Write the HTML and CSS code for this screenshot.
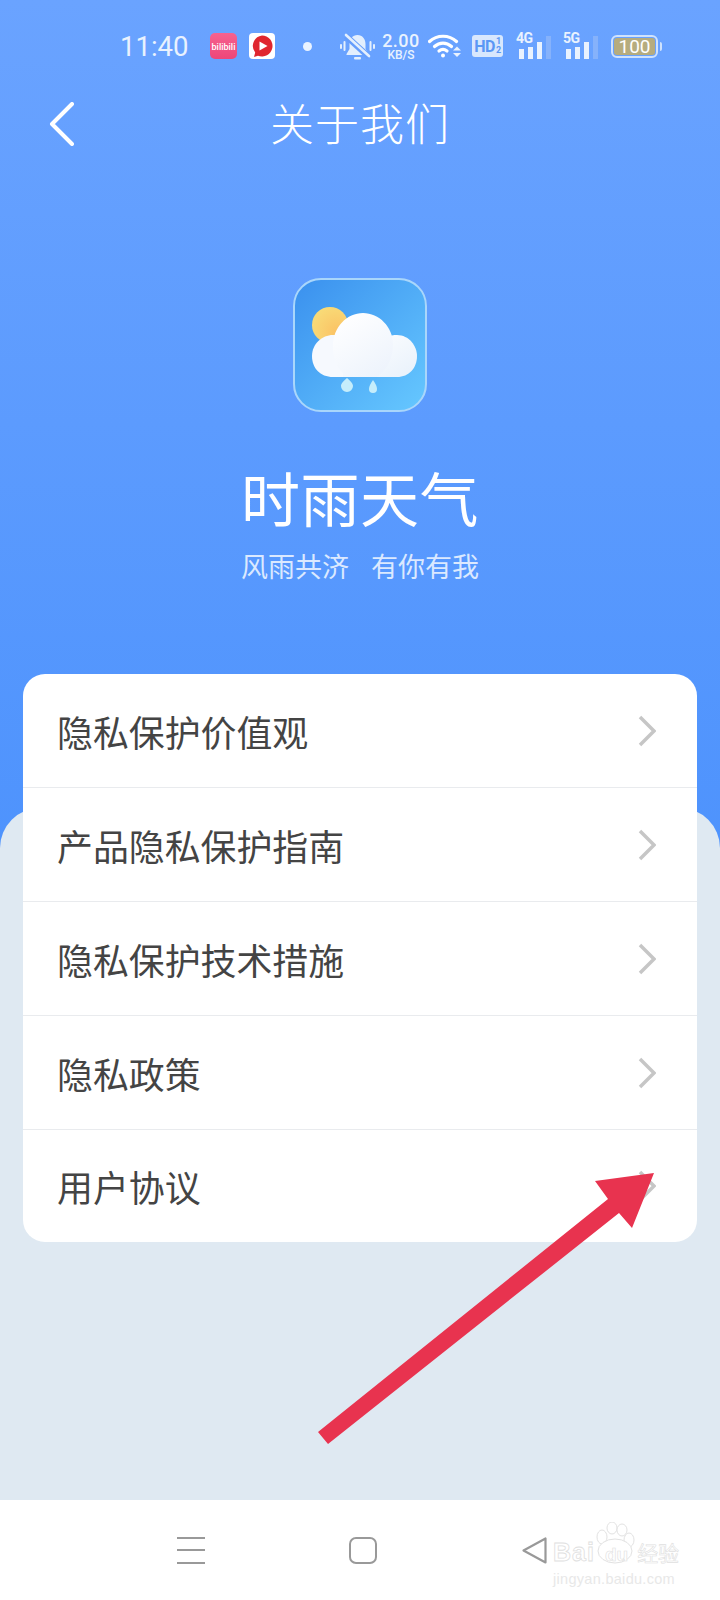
FILE: index.html
```html
<!DOCTYPE html>
<html lang="zh-CN">
    <head>
        <meta charset="UTF-8">
        <title>关于我们</title>
        <link rel="stylesheet" href="styles.css">
    </head>
    <body>
        <div class="screen">
            <div class="top_panel">
                <div class="status_bar">
                    <span class="clock">11:40</span>
                    <span class="app_bili">bilibili</span>
                    <svg class="app_video" viewBox="0 0 26 26">
                        <rect width="26" height="26" rx="4" fill="#ffffff"/>
                        <path d="M13 2.500a10.500 10.500 0 1 1-4 20.200l-4 1.300 1.200-4.500A10.500 10.500 0 0 1 13 2.500z" fill="#e0262f"/>
                        <path d="M10.500 8.500l8 4.500-8 4.500z" fill="#ffffff"/>
                    </svg>
                    <span class="dot"></span>
                    <svg class="bell" viewBox="0 0 35 27">
                        <path d="M17.500 2c-5 0-8 4-8 9v5l-3 5v1h22v-1l-3-5v-5c0-5-3-9-8-9z" fill="#e3effd"/>
                        <rect x="14" y="24" width="7" height="2.500" rx="1" fill="#e3effd"/>
                        <path d="M6 3l23 21" stroke="#649dfc" stroke-width="6"/>
                        <path d="M6 2l23 21" stroke="#e3effd" stroke-width="2.600" stroke-linecap="round"/>
                        <path d="M1 12v3M4.500 9v8M30.500 9v8M34 12v3" stroke="#e3effd" stroke-width="2" stroke-linecap="round"/>
                    </svg>
                    <div class="speed">
                        <span class="speed_num">2.00</span>
                        <span class="speed_unit">KB/S</span>
                    </div>
                    <svg class="wifi" viewBox="0 0 33 24" fill="none" stroke="#ffffff" stroke-width="3.200" stroke-linecap="round">
                        <path d="M1.500 7.500C9 .5 21 .5 28.500 7.500"/>
                        <path d="M6.500 12.500c5-4.500 12-4.500 17 0"/>
                        <path d="M11 17c2.500-2 5.500-2 8 0"/>
                        <circle cx="15" cy="21.500" r="2" fill="#ffffff" stroke="none"/>
                        <path d="M25 16.500l4-4 4 4zM25 19l4 4 4-4z" fill="#e9f2fe" stroke="none"/>
                    </svg>
                    <div class="hd_badge">HD<span class="hd_frac">1<br>2</span></div>
                    <div class="signal">
                        <span class="signal_label">4G</span>
                        <span class="bar bar_1"></span>
                        <span class="bar bar_2"></span>
                        <span class="bar bar_3"></span>
                        <span class="bar bar_4"></span>
                    </div>
                    <div class="signal">
                        <span class="signal_label">5G</span>
                        <span class="bar bar_1"></span>
                        <span class="bar bar_2"></span>
                        <span class="bar bar_3"></span>
                        <span class="bar bar_4"></span>
                    </div>
                    <div class="battery"><span class="battery_fill">100</span></div>
                    <span class="battery_nib"></span>
                </div>

                <div class="nav_bar">
                    <svg class="back" viewBox="0 0 26 44" fill="none" stroke="#ffffff" stroke-width="4" stroke-linecap="round" stroke-linejoin="round">
                        <path d="M23 2L3 22l20 20"/>
                    </svg>
                    <span class="nav_title">关于我们</span>
                </div>

                <div class="hero">
                    <svg class="logo" viewBox="0 0 134 134">
                        <defs>
                            <linearGradient id="logo_bg" x1="0" y1="0" x2="1" y2="1">
                                <stop offset="0" stop-color="#3a90ee"/>
                                <stop offset="1" stop-color="#66c8ff"/>
                            </linearGradient>
                            <linearGradient id="cloud_bg" x1="0" y1="0" x2="1" y2="1">
                                <stop offset="0" stop-color="#ffffff"/>
                                <stop offset="1" stop-color="#e8f1fb"/>
                            </linearGradient>
                            <linearGradient id="cloud_top" x1="0.2" y1="0" x2="0.8" y2="1">
                                <stop offset="0" stop-color="#ffffff"/>
                                <stop offset="1" stop-color="#edf3fc"/>
                            </linearGradient>
                            <radialGradient id="sun_bg" cx="0.7" cy="0.7" r="0.8">
                                <stop offset="0" stop-color="#fbc264"/>
                                <stop offset="1" stop-color="#f8dc78"/>
                            </radialGradient>
                        </defs>
                        <rect x="1" y="1" width="132" height="132" rx="27" fill="url(#logo_bg)" stroke="#a9d6fb" stroke-width="2"/>
                        <circle cx="37" cy="47" r="18" fill="url(#sun_bg)"/>
                        <path d="M40 99C27 99 19 90 19 78C19 66 29 57 40 57C52 57 60 66 60 78V99z" fill="#f6f9fe"/>
                        <path d="M60 99V78C62 66 92 57 104 57C116 57 124 68 124 78C124 90 116 99 104 99z" fill="url(#cloud_bg)"/>
                        <path d="M50 95C42 88 40 78 40 68C40 49 54 35 70 35C86 35 100 49 100 66C100 84 92 92 84 99H50z" fill="url(#cloud_top)"/>
                        <path d="M54 100c3 3 6 5 6 8a6 6 0 0 1-12 0c0-3 3-5 6-8z" fill="#c5edfb"/>
                        <path d="M80 102c2 3 4 6 4 9a4 4 0 0 1-8 0c0-3 2-6 4-9z" fill="#c5edfb"/>
                    </svg>
                    <h1 class="app_name">时雨天气</h1>
                    <p class="slogan"><span>风雨共济</span><span>有你有我</span></p>
                </div>
            </div>

            <div class="sheet">
                <ul class="card">
                    <li class="row"><span>隐私保护价值观</span><svg class="chevron" viewBox="0 0 18 32"><path d="M2 2l14 14L2 30"/></svg></li>
                    <li class="row"><span>产品隐私保护指南</span><svg class="chevron" viewBox="0 0 18 32"><path d="M2 2l14 14L2 30"/></svg></li>
                    <li class="row"><span>隐私保护技术措施</span><svg class="chevron" viewBox="0 0 18 32"><path d="M2 2l14 14L2 30"/></svg></li>
                    <li class="row"><span>隐私政策</span><svg class="chevron" viewBox="0 0 18 32"><path d="M2 2l14 14L2 30"/></svg></li>
                    <li class="row"><span>用户协议</span><svg class="chevron" viewBox="0 0 18 32"><path d="M2 2l14 14L2 30"/></svg></li>
                </ul>
            </div>

            <div class="bottom_nav">
                <div class="menu_icon"><span></span><span></span><span></span></div>
                <div class="home_icon"></div>
                <svg class="back_icon" viewBox="0 0 25 27" fill="none" stroke="#999999" stroke-width="2.200" stroke-linejoin="round">
                    <path d="M23.500 1.500v24L1.500 13.500z"/>
                </svg>
            </div>

            <svg class="arrow" viewBox="0 0 720 1600">
                <polygon points="318,1432 328,1444 619,1213 632,1228 654,1173 595,1181 608,1199" fill="#e8334f"/>
            </svg>

            <div class="watermark">
                <svg class="paw" viewBox="0 0 40 42" fill="#ffffff" stroke="#e2e2e2" stroke-width="1">
                    <ellipse cx="7" cy="15" rx="5" ry="7"/>
                    <ellipse cx="17" cy="6" rx="5" ry="6"/>
                    <ellipse cx="27" cy="8" rx="5" ry="6"/>
                    <ellipse cx="34" cy="18" rx="5" ry="7"/>
                    <ellipse cx="20" cy="29" rx="17" ry="12"/>
                </svg>
                <div class="wm_brand"><span class="wm_bai">Bai</span><span class="wm_du">du</span><span class="wm_cn">经验</span></div>
                <div class="wm_url">jingyan.baidu.com</div>
            </div>
        </div>
    </body>
</html>
```

FILE: styles.css
```css
body {
    margin: 0px;
    padding: 0px;
    background: #ffffff;
    font-family: "Noto Sans CJK SC", "Noto Sans", sans-serif;
}

.screen {
    position: relative;
    width: 720px;   height: 1600px;
    display: flex;
    flex-direction: column;
    overflow: hidden;
    background: #dfe9f2;
}

.top_panel {
    height: 848px;
    flex: none;
    background: linear-gradient(180deg, #6aa3ff 0%, #4e93fd 100%);
    color: #ffffff;
}

/* status bar */
.status_bar {
    height: 90px;
    box-sizing: border-box;
    padding: 2px 0px 0px 120px;
    display: flex;
    align-items: center;
    font-family: "Roboto", sans-serif;
    color: #e9f2fe;
}

.clock { width: 68px; font-size: 27.500px; }

.app_bili {
    width: 27px;    height: 26px;
    margin-left: 22px;
    border-radius: 5px;
    background: linear-gradient(180deg, #f6628f 0%, #ee4679 100%);
    color: #ffffff;
    font-size: 9px;
    font-weight: 500;
    line-height: 28px;
    text-align: center;
    overflow: hidden;
}

.app_video { width: 26px; height: 26px; margin-left: 12px; }

.dot {
    width: 9px;     height: 9px;
    margin-left: 28px;
    border-radius: 50%;
    background: #eaf3ff;
}

.bell { width: 35px; height: 27px; margin-left: 28px; }

.speed {
    width: 40px;
    margin-left: 6px;
    display: flex;
    flex-direction: column;
    align-items: center;
    font-weight: 500;
}
.speed_num { font-size: 18px; line-height: 17px; letter-spacing: 0.5px; }
.speed_unit { font-size: 12px; line-height: 12px; }

.wifi { width: 33px; height: 24px; margin-left: 7px; }

.hd_badge {
    width: 31px;    height: 22px;
    margin-left: 11px;
    display: flex;
    align-items: center;
    justify-content: center;
    border-radius: 3px;
    background: #d8e7fd;
    color: #5b97f5;
    font-size: 16px;
    font-weight: 700;
    letter-spacing: -0.5px;
}
.hd_frac { font-size: 9px; line-height: 9px; margin-left: 1px; text-align: center; }

.signal {
    position: relative;
    width: 35px;    height: 26px;
    box-sizing: border-box;
    margin-left: 13px;
    padding-left: 3px;
    display: flex;
    align-items: flex-end;
    gap: 4px;
}
.signal + .signal { margin-left: 12px; }
.signal_label {
    position: absolute;
    top: -2px;      left: 0px;
    font-size: 14px;
    font-weight: 700;
    line-height: 14px;
    letter-spacing: -0.5px;
}
.bar { width: 5px; background: #e9f2fe; }
.bar_1 { height: 10px; }
.bar_2 { height: 12px; }
.bar_3 { height: 17px; }
.bar_4 { height: 23px; background: #86b2fb; }

.battery {
    width: 47px;    height: 23px;
    margin-left: 13px;
    box-sizing: border-box;
    padding: 1px;
    border: solid 2px #cfe2fc;
    border-radius: 6px;
}
.battery_fill {
    display: block;
    height: 17px;
    border-radius: 3px;
    background: #b6ac7e;
    color: #ffffff;
    font-size: 19px;
    line-height: 17px;
    text-align: center;
}
.battery_nib {
    width: 2px;     height: 9px;
    margin-left: 2px;
    border-radius: 0px 2px 2px 0px;
    background: #cfe2fc;
}

/* title bar */
.nav_bar {
    position: relative;
    height: 70px;
    display: flex;
    align-items: center;
    justify-content: center;
}
.back {
    position: absolute;
    top: 12px;      left: 49px;
    width: 26px;    height: 44px;
}
.nav_title {
    margin-bottom: 6px;
    font-size: 44px;
    line-height: 70px;
    letter-spacing: 1px;
    font-weight: 300;
}

/* logo + name */
.hero {
    display: flex;
    flex-direction: column;
    align-items: center;
    padding-top: 118px;
}
.logo { width: 134px; height: 134px; }
.app_name {
    margin: 50px 0px 0px 0px;
    font-size: 59px;
    font-weight: 400;
    line-height: 70px;
    letter-spacing: 0.5px;
}
.slogan {
    margin: 16px 0px 0px 0px;
    display: flex;
    gap: 22px;
    color: #dbe9ff;
    font-size: 27px;
    line-height: 36px;
}

/* list */
.sheet {
    flex: 1;
    margin-top: -40px;
    border-radius: 40px 40px 0px 0px;
    background: #dfe9f2;
}

.card {
    list-style: none;
    margin: -134px 23px 0px 23px;
    padding: 0px;
    border-radius: 22px;
    background: #ffffff;
}

.row {
    height: 113px;
    display: flex;
    align-items: center;
    justify-content: space-between;
    padding: 0px 41px 0px 34px;
    border-bottom: solid 1px #e9ebee;
    color: #444444;
    font-size: 35.900px;
}
.row:last-child { height: 112px; border-bottom: none; }

.chevron {
    width: 18px;    height: 32px;
    fill: none;
    stroke: #c6c6c6;
    stroke-width: 3.500;
}

/* soft keys */
.bottom_nav {
    height: 100px;
    flex: none;
    box-sizing: border-box;
    padding: 0px 0px 0px 177px;
    display: flex;
    align-items: center;
    gap: 144px;
    background: #ffffff;
}
.menu_icon {
    width: 28px;    height: 27px;
    display: flex;
    flex-direction: column;
    justify-content: space-between;
}
.menu_icon span { height: 2px; background: #999999; }
.home_icon {
    width: 28px;    height: 27px;
    box-sizing: border-box;
    border: solid 2px #999999;
    border-radius: 7px;
}
.back_icon { width: 25px; height: 27px; margin-left: 1px; }

/* annotation overlay */
.arrow {
    position: absolute;
    top: 0px;       left: 0px;
    width: 720px;   height: 1600px;
}

.watermark {
    position: absolute;
    top: 1522px;    left: 553px;
    width: 128px;
    color: #ffffff;
}
.paw {
    position: absolute;
    top: 0px;       left: 42px;
    width: 40px;    height: 42px;
}
.wm_brand {
    position: relative;
    display: flex;
    align-items: baseline;
    margin-top: 16px;
    font-family: "Liberation Sans", sans-serif;
    line-height: 28px;
}
.wm_bai {
    font-size: 25px;
    font-weight: 700;
    letter-spacing: 1px;
    -webkit-text-stroke: 0.8px #e0e0e0;
}
.wm_du {
    margin-left: 10px;
    font-size: 19px;
    font-weight: 700;
    -webkit-text-stroke: 0.6px #e0e0e0;
}
.wm_cn {
    margin-left: 9px;
    font-family: "Noto Sans CJK SC", sans-serif;
    font-size: 21px;
    -webkit-text-stroke: 0.6px #e0e0e0;
}
.wm_url {
    margin-top: 2px;
    font-family: "Liberation Sans", sans-serif;
    font-size: 14.500px;
    line-height: 16px;
    color: #e8e8e8;
    letter-spacing: 0.3px;
}
```
